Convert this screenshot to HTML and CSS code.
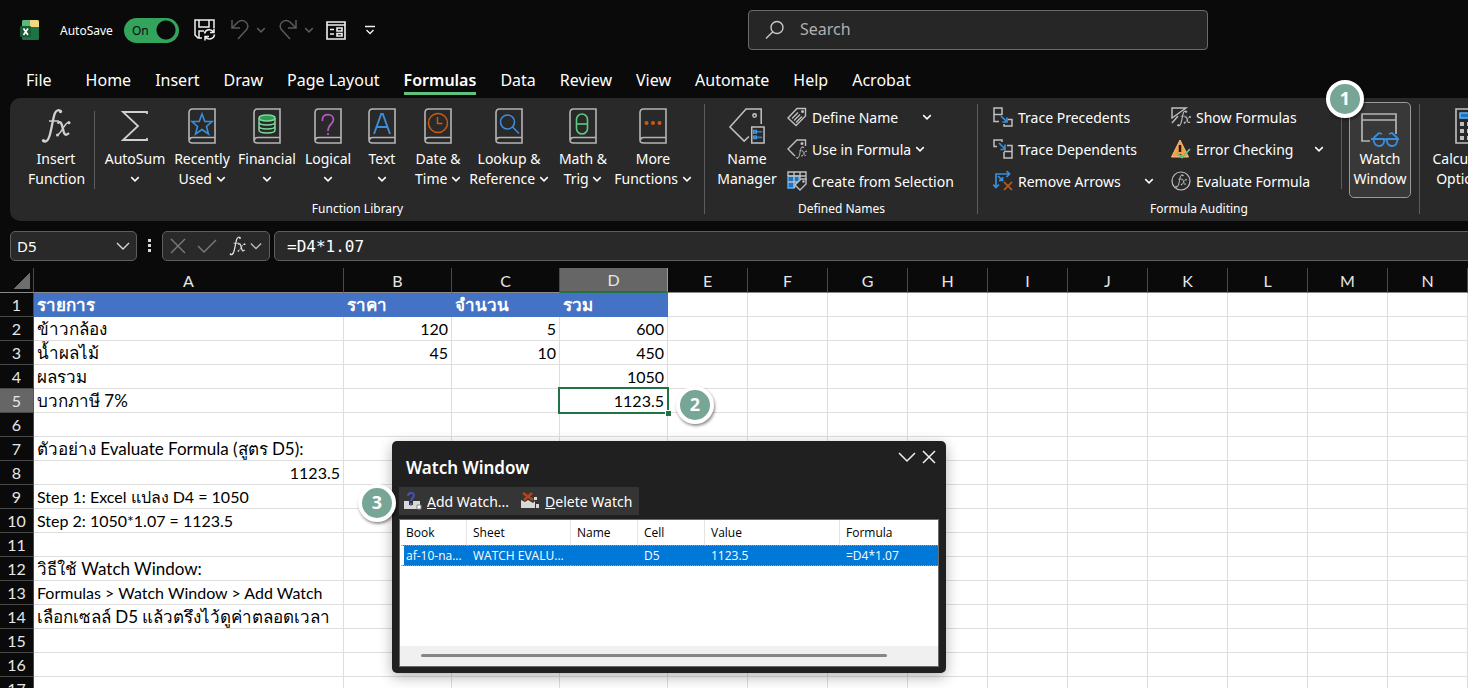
FILE: index.html
```html
<!DOCTYPE html>
<html lang="en">
<head>
    <meta charset="UTF-8">
    <title>Watch Window</title>
    <link rel="stylesheet" href="styles.css">
</head>
<body>
<svg class="defs" width="0" height="0">
    <symbol id="down" viewBox="0 0 8 8"><path d="M1 2.5 4 5.5 7 2.5" fill="none" stroke="currentColor" stroke-width="1.2"/></symbol>
    <symbol id="book" viewBox="0 0 28 36"><path d="M27 1H4.500Q1 1 1 5V32Q1 35 4.500 35H27ZM27 29.500H4.500Q1.500 29.500 1.500 32" fill="none" stroke="#b4b4b4" stroke-width="1.600"/></symbol>
    <symbol id="fx" viewBox="0 0 30 36">
        <path d="M19.500 3.500C18.500 1.500 15.500 1.500 13.800 5.500C12 10 10.500 22 8.500 28C7 33 4 35 2 32.500" fill="none" stroke="currentColor" stroke-width="2.300"/>
        <circle cx="19.500" cy="3.500" r="1.700" fill="currentColor"/><circle cx="2.500" cy="32.500" r="1.600" fill="currentColor"/>
        <path d="M8 13H18" stroke="currentColor" stroke-width="1.500"/>
        <path d="M16.500 15.500C20 11.500 21 17 22 21C23 26.500 24.500 28.500 28 25" fill="none" stroke="currentColor" stroke-width="2.300"/>
        <path d="M28.500 14C24 13 21 25 16 27.500" fill="none" stroke="currentColor" stroke-width="1.400"/>
        <circle cx="28" cy="14.800" r="1.500" fill="currentColor"/><circle cx="16.500" cy="27" r="1.500" fill="currentColor"/>
    </symbol>
</svg>

<div class="titlebar">
    <div class="quick">
        <svg class="logo" width="20" height="20" viewBox="0 0 20 20">
            <rect x="2" y="0" width="17" height="20" rx="1.500" fill="#1f7244"/>
            <path d="M3.500 0H10V7H2V1.500Q2 0 3.500 0Z" fill="#5cb87c"/>
            <path d="M10 0H17.500Q19 0 19 1.500V7H10Z" fill="#f2d680"/>
            <rect x="0" y="6" width="11" height="11" rx="1" fill="#185c37"/>
            <path d="M3.500 8.500 8 15M8 8.500 3.500 15" stroke="#fff" stroke-width="1.700"/>
        </svg>
        <label class="autosave" for="autosave">AutoSave</label>
        <span class="switch"><input type="checkbox" id="autosave" checked><span>On</span></span>
        <button aria-label="Save">
            <svg width="22" height="22" viewBox="0 0 22 22" fill="none" stroke="#f0f0f0" stroke-width="1.500">
                <path d="M8 19H4L1 16V1H20V9M5 1V8H15V1M5 19V12H10"/>
                <path d="M10.500 14.500A5 5 0 0 1 19.500 13M20 9.500V13.500H16M20.500 15.500A5 5 0 0 1 11.500 18M11 21.500V17.500H15"/>
            </svg>
        </button>
        <button class="dim" aria-label="Undo">
            <svg width="20" height="22" viewBox="0 0 20 22" fill="none" stroke="currentColor" stroke-width="1.500"><path d="M2 1V9H10M2 9 8 3C13-1 20 4 17 10L8 20"/></svg>
        </button>
        <button class="dim" aria-label="Undo list"><svg width="10" height="10"><use href="#down"/></svg></button>
        <button class="dim redo" aria-label="Redo">
            <svg width="20" height="22" viewBox="0 0 20 22" fill="none" stroke="currentColor" stroke-width="1.500"><path d="M18 1V9H10M18 9 12 3C7-1 0 4 3 10L12 20"/></svg>
        </button>
        <button class="dim" aria-label="Redo list"><svg width="10" height="10"><use href="#down"/></svg></button>
        <button class="form" aria-label="Form">
            <svg width="20" height="19" viewBox="0 0 20 19" fill="none" stroke="#f0f0f0" stroke-width="1.600"><path d="M1 1H19V18H1ZM1 4H19M4 8.500H8M4 13H8"/><path d="M11 7H16V10H11ZM11 12.500H16V15H11Z"/></svg>
        </button>
        <button class="more" aria-label="Customize toolbar">
            <svg width="10" height="10" viewBox="0 0 10 10" fill="none" stroke="#f0f0f0" stroke-width="1.400"><path d="M0 1.500H10M1.500 5 5 8.500 8.500 5"/></svg>
        </button>
    </div>
    <div class="search">
        <svg width="20" height="20" viewBox="0 0 20 20" fill="none" stroke="#c8c8c8" stroke-width="1.400"><circle cx="12" cy="7.500" r="6"/><path d="M7.800 11.800 1 18.500"/></svg>
        <input type="text" aria-label="Search" placeholder="Search">
    </div>
</div>

<nav class="tabs">
    <a href="#" class="file">File</a>
    <a href="#">Home</a>
    <a href="#">Insert</a>
    <a href="#">Draw</a>
    <a href="#">Page Layout</a>
    <a href="#" class="current">Formulas</a>
    <a href="#">Data</a>
    <a href="#">Review</a>
    <a href="#">View</a>
    <a href="#">Automate</a>
    <a href="#">Help</a>
    <a href="#">Acrobat</a>
</nav>

<div class="ribbon">
    <div class="group library">
        <div class="tools">
            <button class="big insert"><svg width="30" height="36" color="#d0d0d0"><use href="#fx"/></svg>Insert<br>Function</button>
            <i class="line"></i>
            <div class="books">
                <button class="big"><svg width="28" height="36" viewBox="0 0 28 36"><path d="M26 6V4H2L17 18 2 32H26V30" fill="none" stroke="#d0d0d0" stroke-width="1.800"/></svg>AutoSum<br><svg class="down"><use href="#down"/></svg></button>
                <button class="big"><svg width="28" height="36"><use href="#book"/><path d="M14 6 16.800 13.500H24L18.500 18.500 20.500 26 14 21.500 7.500 26 9.500 18.500 4 13.500H11.200Z" fill="none" stroke="#3a8fdc" stroke-width="1.600"/></svg>Recently<br>Used <svg class="down"><use href="#down"/></svg></button>
                <button class="big"><svg width="28" height="36"><use href="#book"/><g fill="none" stroke="#7ed59a" stroke-width="1.500"><ellipse cx="14" cy="10" rx="8" ry="3" fill="#2d9d55"/><path d="M6 10V22Q6 25 14 25T22 22V10M6 14Q6 17 14 17T22 14M6 18Q6 21 14 21T22 18"/></g></svg>Financial<br><svg class="down"><use href="#down"/></svg></button>
                <button class="big"><svg width="28" height="36"><use href="#book"/><path d="M8.500 13V11C8.500 5 19.500 5 19.500 11.500C19.500 16 14 16 14 23M14 25V27" fill="none" stroke="#b65cc8" stroke-width="1.700"/></svg>Logical<br><svg class="down"><use href="#down"/></svg></button>
                <button class="big"><svg width="28" height="36"><use href="#book"/><path d="M6 26 13.200 6H14.800L22 26M8.800 19H19.200" fill="none" stroke="#3a8fdc" stroke-width="1.900"/></svg>Text<br><svg class="down"><use href="#down"/></svg></button>
                <button class="big"><svg width="28" height="36"><use href="#book"/><g fill="none" stroke="#c75b12" stroke-width="1.500"><circle cx="14" cy="15" r="9.500"/><path d="M13.500 9V15.500H18.500"/></g></svg>Date &amp;<br>Time <svg class="down"><use href="#down"/></svg></button>
                <button class="big"><svg width="28" height="36"><use href="#book"/><g fill="none" stroke="#3a8fdc" stroke-width="1.600"><circle cx="12.500" cy="14" r="7"/><path d="M17.500 19 24 25.500"/></g></svg>Lookup &amp;<br>Reference <svg class="down"><use href="#down"/></svg></button>
                <button class="big"><svg width="28" height="36"><use href="#book"/><g fill="none" stroke="#5fc97f" stroke-width="1.600"><rect x="7.500" y="6" width="11" height="20" rx="5.500"/><path d="M7.500 16H18.500"/></g></svg>Math &amp;<br>Trig <svg class="down"><use href="#down"/></svg></button>
                <button class="big"><svg width="28" height="36"><use href="#book"/><g fill="#c75b12"><circle cx="7.500" cy="15" r="2"/><circle cx="14" cy="15" r="2"/><circle cx="20.500" cy="15" r="2"/></g></svg>More<br>Functions <svg class="down"><use href="#down"/></svg></button>
            </div>
        </div>
        <div class="caption">Function Library</div>
    </div>

    <div class="group names">
        <div class="tools">
            <button class="big">
                <svg width="38" height="38" viewBox="0 0 38 38" fill="none" stroke="#c0c0c0" stroke-width="1.600"><path d="M21 30 16 35 1 20 18 1H34V17"/><circle cx="27" cy="8" r="1.800"/><path d="M24 20H37V37H24Z"/><path d="M26 25H35M26 31H35" stroke="#2b7cd3"/><path d="M26 23.500H29V26.500H26ZM26 29.500H29V32.500H26Z" stroke="#4aa0ee" stroke-width="1.200"/></svg>Name<br>Manager</button>
            <div class="stack">
                <button><svg width="20" height="20" viewBox="0 0 20 20" fill="none" stroke="#c0c0c0" stroke-width="1.400"><path d="M1 11 10 1.500H18.500V9L9 18.500ZM5 11.500 11 5.500M7 13.500 13 7.500M9 15.500 15 9.500"/><circle cx="15.500" cy="4.500" r=".8"/></svg>Define Name<svg class="down far"><use href="#down"/></svg></button>
                <button><svg width="20" height="20" viewBox="0 0 20 20" fill="none" stroke="#c0c0c0" stroke-width="1.400"><path d="M8 17 1 10 10 1H18.500V7"/><circle cx="15" cy="4.500" r=".8"/><svg x="9" y="7" width="11" height="13" color="#c0c0c0"><use href="#fx"/></svg></svg>Use in Formula<svg class="down"><use href="#down"/></svg></button>
                <button><svg width="20" height="20" viewBox="0 0 20 20" fill="none" stroke="#c0c0c0" stroke-width="1.400"><path d="M1 5H12V11L7 17H1Z" fill="#1a73c8" stroke="#5eb0f5"/><path d="M1 5V1H19V9M1 5H19M7 1V17M13 1V8M1 11H12"/><path d="M8 14 14 8H19V13L13 19Z" fill="#292929"/><circle cx="16.500" cy="10.500" r=".6"/></svg>Create from Selection</button>
            </div>
        </div>
        <div class="caption">Defined Names</div>
    </div>

    <div class="group auditing">
        <div class="tools">
            <div class="stack trace">
                <button><svg width="20" height="20" viewBox="0 0 20 20" fill="none" stroke="#c0c0c0" stroke-width="1.500"><path d="M6 14.500H1V1H9V8M1 7.500H9M15 12.500H19V19H11V17"/><path d="M8 9 14 15M14 10.500V15H9.500" stroke="#3a8fdc" stroke-width="1.700"/></svg>Trace Precedents</button>
                <button><svg width="20" height="20" viewBox="0 0 20 20" fill="none" stroke="#c0c0c0" stroke-width="1.500"><path d="M4 7.500H1V1H9V3M11 13V19H19V6.500H14M11 12.500H19"/><path d="M6 4 12 10M12 5.500V10.500H7.500" stroke="#3a8fdc" stroke-width="1.700"/></svg>Trace Dependents</button>
                <button><svg width="20" height="20" viewBox="0 0 20 20" fill="none" stroke="#3a8fdc" stroke-width="1.700"><path d="M3 17V3H16M13.500 0 16.500 3 13.500 6M0 13.500 3 16.500 6 13.500M5 5 9.500 9.500M9.500 6V9.500H6"/><path d="M11 11 19 19M19 11 11 19" stroke="#c75b12"/></svg>Remove Arrows<svg class="down far"><use href="#down"/></svg></button>
            </div>
            <div class="stack">
                <button><svg width="20" height="20" viewBox="0 0 20 20" fill="none" stroke="#c0c0c0" stroke-width="1.400"><path d="M1 11V1H15ZM7 9 1 16"/><svg x="6" y="3" width="14" height="17" color="#c0c0c0"><use href="#fx"/></svg></svg>Show Formulas</button>
                <button><svg width="20" height="20" viewBox="0 0 20 20" fill="none"><path d="M9 1 17.500 18H.5Z" fill="#f0a04b" stroke="#f8c080"/><path d="M9 6V13M9 15V17" stroke="#2b1a08" stroke-width="2.500"/><path d="M6 14 11 18.500 19 10" stroke="#5fc97f" stroke-width="1.800"/></svg>Error Checking<svg class="down far"><use href="#down"/></svg></button>
                <button><svg width="20" height="20" viewBox="0 0 20 20" fill="none" stroke="#c0c0c0" stroke-width="1.200"><circle cx="10" cy="10" r="9"/><svg x="4" y="3" width="12" height="14" color="#d0d0d0"><use href="#fx"/></svg></svg>Evaluate Formula</button>
            </div>
            <i class="line"></i>
            <div class="watch">
                <button class="big">
                    <svg width="38" height="36" viewBox="0 0 38 36" fill="none" stroke="#b4b4b4" stroke-width="1.700"><path d="M9 29H1V2H35V22M1 8H35"/><g stroke="#3a8fdc" stroke-width="1.800"><path d="M12.500 27H23V30Q22 34 18 34Q13 34 12.500 27ZM26 27H36.500Q36 34 31.500 34Q27 34 26 30ZM23 28Q24.500 27 26 28M10 27H13M36 27H38M12.500 26 18 21 21 22M36.500 26 31 21 28 22"/></g></svg>Watch<br>Window</button>
                <span class="step">1</span>
            </div>
        </div>
        <div class="caption">Formula Auditing</div>
    </div>

    <div class="group calc">
        <div class="tools">
            <button class="big"><svg width="28" height="36" viewBox="0 0 28 36" fill="none" stroke="#c0c0c0" stroke-width="1.600"><path d="M1 1H27V35H1Z"/><path d="M5 5H23V10H5Z" fill="#1a73c8" stroke="#5eb0f5"/><path d="M5 16H23M5 23H23M5 30H23" stroke-width="4" stroke-dasharray="4 3"/></svg>Calculation<br>Options <svg class="down"><use href="#down"/></svg></button>
        </div>
    </div>
</div>

<div class="formulabar">
    <div class="namebox">
        <input type="text" aria-label="Name box" value="D5">
        <svg width="14" height="14" viewBox="0 0 14 14" fill="none" stroke="#d8d8d8" stroke-width="1.400"><path d="M1 4 7 10 13 4"/></svg>
    </div>
    <svg width="4" height="14" viewBox="0 0 4 14" fill="#d8d8d8"><path d="M0 0H3V3H0ZM0 5H3V8H0ZM0 10H3V13H0Z"/></svg>
    <div class="entry">
        <button aria-label="Cancel"><svg width="16" height="16" viewBox="0 0 16 16" fill="none" stroke="#7c7c7c" stroke-width="1.400"><path d="M1 1 15 15M15 1 1 15"/></svg></button>
        <button aria-label="Enter"><svg width="20" height="16" viewBox="0 0 20 16" fill="none" stroke="#7c7c7c" stroke-width="1.400"><path d="M1 8 7 14 19 2"/></svg></button>
        <button aria-label="Insert Function"><svg width="19" height="20" color="#e0e0e0"><use href="#fx"/></svg></button>
        <button class="list" aria-label="Function list"><svg width="12" height="12" viewBox="0 0 14 14" fill="none" stroke="#c0c0c0" stroke-width="1.500"><path d="M1 4 7 10 13 4"/></svg></button>
    </div>
    <input type="text" class="formula" aria-label="Formula" value="=D4*1.07">
</div>

<div class="sheet">
    <table class="grid">
        <colgroup>
            <col class="num"><col class="wide"><col class="mid"><col class="mid"><col class="mid">
            <col class="std"><col class="std"><col class="std"><col class="std"><col class="std"><col class="std"><col class="std"><col class="std"><col class="std"><col>
        </colgroup>
        <thead><tr id="letters"></tr></thead>
        <tbody id="rows"></tbody>
    </table>

    <div class="window">
        <div class="head">
            <h2>Watch Window</h2>
            <button aria-label="Collapse"><svg width="18" height="16" viewBox="0 0 18 16" fill="none" stroke="#f0f0f0" stroke-width="1.500"><path d="M1 4 9 12 17 4"/></svg></button>
            <button aria-label="Close"><svg width="14" height="16" viewBox="0 0 14 16" fill="none" stroke="#f0f0f0" stroke-width="1.500"><path d="M1 2 13 14M13 2 1 14"/></svg></button>
        </div>
        <div class="bar">
            <button><svg width="18" height="18" viewBox="0 0 18 18"><path d="M0 9H5V13H9V9H16V17H0Z" fill="#d8d8d8"/><path d="M13 13H17V17H13Z" fill="#fff" stroke="#888"/><path d="M4 4C4 0 10 0 10 3.500C10 6 7 6 7 9M7 11V13.500" fill="none" stroke="#4a4fb5" stroke-width="2"/></svg><span><u>A</u>dd Watch...</span></button>
            <button><svg width="20" height="18" viewBox="0 0 20 18"><path d="M1 8 5 10 8 8 13 11 15 9V16H1Z" fill="#d8d8d8"/><path d="M14 5H17V8H14ZM16 12H19V16H16Z" fill="#d8d8d8"/><path d="M3 1 13 8M12 1 4 8" stroke="#b8441a" stroke-width="2.400"/></svg><span><u>D</u>elete Watch</span></button>
        </div>
        <div class="list">
            <table>
                <colgroup><col class="c67"><col class="c104"><col class="c67"><col class="c67"><col class="c135"><col></colgroup>
                <thead><tr><th>Book</th><th>Sheet</th><th>Name</th><th>Cell</th><th>Value</th><th>Formula</th></tr></thead>
                <tbody><tr><td>af-10-na...</td><td>WATCH EVALU...</td><td></td><td>D5</td><td>1123.5</td><td>=D4*1.07</td></tr></tbody>
            </table>
            <div class="scroll"><i></i></div>
        </div>
        <span class="step">3</span>
    </div>
</div>

<script>
	var letters = "ABCDEFGHIJKLMN";
	var data = {
		A1: "รายการ", B1: "ราคา", C1: "จำนวน", D1: "รวม",
		A2: "ข้าวกล้อง", B2: 120, C2: 5, D2: 600,
		A3: "น้ำผลไม้", B3: 45, C3: 10, D3: 450,
		A4: "ผลรวม", D4: 1050,
		A5: "บวกภาษี 7%", D5: 1123.5,
		A7: "ตัวอย่าง Evaluate Formula (สูตร D5):",
		A8: 1123.5,
		A9: "Step 1: Excel แปลง D4 = 1050",
		A10: "Step 2: 1050*1.07 = 1123.5",
		A12: "วิธีใช้ Watch Window:",
		A13: "Formulas > Watch Window > Add Watch",
		A14: "เลือกเซลล์ D5 แล้วตรึงไว้ดูค่าตลอดเวลา"
	};

	//column letters
	var oLetters = document.getElementById("letters");
	oLetters.innerHTML = '<th class="corner"></th>';
	for (var i=0;i<letters.length;i++) {
		var th = document.createElement("th");
		th.textContent = letters[i];
		if(letters[i]=="D") th.className = "on";
		oLetters.appendChild(th);
	}

	//rows
	var oRows = document.getElementById("rows");
	for (var r=1;r<=17;r++) {
		var tr = document.createElement("tr");
		var num = document.createElement("th");
		num.textContent = r;
		if(r==5) num.className = "on";
		tr.appendChild(num);
		for (var c=0;c<letters.length;c++) {
			var td = document.createElement("td");
			var val = data[letters[c]+r];
			if(val!==undefined) td.textContent = val;
			if(typeof val=="number") td.className = "right";
			//thai text is set one size larger
			if(/^[ก-๙]/.test(val)) td.className = "thai";
			if(r==1 && c<4) td.className = "thai title";
			if(r==5 && letters[c]=="D"){
				td.className = "right active";
				td.innerHTML += '<b></b><span class="step">2</span>';
			}
			tr.appendChild(td);
		}
		oRows.appendChild(tr);
	}
</script>
</body>
</html>
```
FILE: styles.css
```css
* {
    padding: 0;
    margin: 0;
    box-sizing: border-box;
}

body {
    height: 100vh;
    display: flex;
    flex-direction: column;
    overflow: hidden;
    background: #0a0a0a;
    color: #fff;
    font-family: "Noto Sans", "Open Sans", sans-serif;
    font-size: 14px;
}

button, input {
    font: inherit;
    color: inherit;
    background: none;
    border: 0;
    outline: 0;
}

svg {
    display: block;
    flex: none;
}

.defs {
    position: absolute;
}

/* title bar */
.titlebar {
    display: flex;
    align-items: center;
    height: 60px;
    flex: none;
}

.quick {
    display: flex;
    align-items: center;
    flex: 0 0 748px;
    padding-left: 20px;
}

.autosave {
    margin-left: 20px;
    width: 56px;
    font-size: 12px;
    white-space: nowrap;
}

.switch {
    position: relative;
    margin: 0 15px 0 8px;
    width: 55px;
    height: 25px;
}

.switch input {
    display: block;
    appearance: none;
    width: 55px;
    height: 25px;
    border-radius: 13px;
    background: radial-gradient(circle at 42px 12px, #0a0a0a 9px, #33a45c 10px);
}

.switch span {
    position: absolute;
    left: 8px;
    top: 4px;
    font-size: 12px;
    line-height: 18px;
    color: #0a0a0a;
    pointer-events: none;
}

.quick button {
    margin-right: 6px;
}

.quick button:nth-of-type(1) {
    margin-right: 14px;
}

.quick .dim {
    color: #5a5a5a;
}

.quick .redo {
    margin-left: 6px;
}

.quick .form {
    margin-left: 6px;
    margin-right: 19px;
}

.search {
    display: flex;
    align-items: center;
    gap: 15px;
    width: 460px;
    height: 40px;
    padding-left: 16px;
    border: 1px solid #6a6a6a;
    border-radius: 4px;
    background: #262626;
    font-size: 16px;
}

.search input {
    flex: 1;
    padding-bottom: 2px;
}

.search input::placeholder {
    color: #b0b0b0;
}

/* tabs */
.tabs {
    display: flex;
    gap: 24px;
    height: 38px;
    flex: none;
    padding: 6px 0 0 26px;
}

.tabs a {
    height: 29px;
    line-height: 28px;
    font-size: 16px;
    color: #fff;
    text-decoration: none;
    white-space: nowrap;
}

.tabs .file {
    margin-right: 10px;
}

.tabs .current {
    font-weight: 600;
    border-bottom: 3px solid #5fc27d;
}

/* ribbon */
.ribbon {
    display: flex;
    flex: none;
    height: 123px;
    margin-left: 10px;
    border-radius: 10px 0 0 10px;
    background: #292929;
}

.group {
    position: relative;
    flex: none;
    padding: 9px 0 0;
}

.group::after {
    content: "";
    position: absolute;
    right: 0;
    top: 6px;
    width: 1px;
    height: 110px;
    background: #5c5c5c;
}

.tools {
    display: flex;
    align-items: flex-start;
    height: 92px;
}

.caption {
    font-size: 12px;
    line-height: 20px;
    text-align: center;
}

.big {
    display: block;
    line-height: 20px;
    text-align: center;
    white-space: nowrap;
}

.big > svg:first-child {
    margin: 1px auto 5px;
    height: 36px;
    overflow: visible;
}

svg.down {
    display: inline-block;
    width: 10px;
    height: 10px;
}

.line {
    width: 1px;
    height: 78px;
    margin-top: 4px;
    background: #5c5c5c;
}

.library {
    width: 695px;
}

.insert {
    width: 56px;
    margin: 0 10px 0 18px;
}

.books {
    display: grid;
    grid-template-columns: 70px 64px 66px 56px 52px 60px 82px 66px 74px;
    margin-left: 5px;
    align-items: start;
}

.books .big {
    margin: 0 -4px;
}

.names {
    width: 273px;
    padding-left: 12px;
}

.names .caption {
    margin-left: -12px;
}

.names .big {
    width: 60px;
    margin-right: 10px;
}

.stack button {
    display: flex;
    align-items: center;
    height: 32px;
    white-space: nowrap;
}

.stack {
    margin-top: -6px;
}

.stack button > svg:first-child {
    margin-right: 5px;
}

.stack .down {
    margin-left: 4px;
}

.stack .far {
    margin-left: auto;
}

.names .stack button:first-child {
    width: 145px;
}

.auditing {
    width: 442px;
}

.auditing .stack {
    width: 153px;
    margin-right: 17px;
}

.auditing .trace {
    width: 161px;
    margin-left: 15px;
}

.auditing .stack button {
    width: 100%;
}

.watch {
    position: relative;
    margin: -5px 0 0 7px;
}

.watch .big {
    width: 62px;
    height: 96px;
    padding-bottom: 8px;
    border: 1px solid #9a9a9a;
    border-radius: 5px;
    background: #383838;
}

.watch .big > svg:first-child {
    margin-top: 9px;
    margin-bottom: 1px;
}

.watch .step {
    left: -23px;
    top: -22px;
}

.calc {
    width: 98px;
}

.calc .big {
    width: 100%;
}

.step {
    position: absolute;
    width: 38px;
    height: 38px;
    border: 4px solid #fff;
    border-radius: 50%;
    background: #77a596;
    box-shadow: 1px 2px 3px rgba(0, 0, 0, .45);
    color: #fff;
    font-family: "Open Sans", sans-serif;
    font-size: 18px;
    font-weight: bold;
    line-height: 28px;
    text-align: center;
}

/* formula bar */
.formulabar {
    display: flex;
    align-items: center;
    height: 30px;
    flex: none;
    margin: 10px 0 7px 10px;
}

.namebox, .entry, .formula {
    display: flex;
    align-items: center;
    height: 30px;
    border: 1px solid #5e5e5e;
    border-radius: 5px;
    background: #292929;
}

.namebox {
    width: 127px;
    margin-right: 11px;
    padding: 0 6px;
}

.namebox input {
    width: 99px;
    font-size: 15px;
}

.entry {
    width: 108px;
    margin: 0 4px 0 10px;
    padding-left: 7px;
    gap: 11px;
}

.entry .list {
    margin-left: -8px;
}

.formula {
    flex: 1;
    margin-right: -10px;
    padding-left: 12px;
    font-family: "DejaVu Sans Mono", monospace;
    font-size: 16px;
}

/* sheet */
.sheet {
    position: relative;
    flex: 1;
    overflow: hidden;
    background: #fff;
    color: #000;
}

.grid {
    width: 100%;
    min-width: 1468px;
    table-layout: fixed;
    border-collapse: separate;
    border-spacing: 0;
    font-family: Lato, sans-serif;
    font-size: 16px;
}

.num {
    width: 34px;
}

.wide {
    width: 310px;
}

.mid {
    width: 108px;
}

.std {
    width: 80px;
}

.grid th {
    height: 24px;
    background: #0a0a0a;
    border-right: 1px solid #4a4a4a;
    border-bottom: 1px solid #4a4a4a;
    color: #e6e6e6;
    font-weight: normal;
    line-height: 23px;
}

.grid thead th {
    height: 25px;
    border-bottom-color: #8a8a8a;
}

.grid .corner {
    background: linear-gradient(135deg, transparent 50%, #6e6e6e 50%) 14px 5px / 16px 16px no-repeat #0a0a0a;
}

.grid th.on {
    background: #666;
    border-right-color: #217346;
}

.grid thead th.on {
    border-right-color: #9a9a9a;
    border-bottom: 2px solid #217346;
}

.grid td {
    height: 24px;
    padding: 0 3px;
    border-right: 1px solid #dedede;
    border-bottom: 1px solid #dedede;
    line-height: 23px;
    white-space: nowrap;
}

.grid .right {
    text-align: right;
}

.grid .thai {
    font-size: 17px;
}

.grid .title {
    background: #4472c4;
    border-color: #4472c4;
    color: #fff;
    font-weight: bold;
}

.grid .active {
    position: relative;
    z-index: 1;
}

.active b {
    position: absolute;
    left: -2px;
    top: -2px;
    right: -2px;
    bottom: -2px;
    border: 2px solid #217346;
}

.active b::after {
    content: "";
    position: absolute;
    right: -4px;
    bottom: -4px;
    width: 5px;
    height: 5px;
    background: #217346;
    border: 1px solid #fff;
    border-width: 1px 0 0 1px;
    box-sizing: content-box;
}

.active .step {
    right: -47px;
    top: -3px;
}

/* watch window */
.window {
    position: absolute;
    z-index: 2;
    left: 392px;
    top: 173px;
    width: 554px;
    padding: 0 7px 6px;
    border-radius: 5px;
    background: #202020;
    box-shadow: 0 4px 14px rgba(0, 0, 0, .3);
    color: #fff;
}

.head {
    display: flex;
    align-items: flex-start;
    height: 46px;
    padding: 8px 3px 0 7px;
}

.head h2 {
    flex: 1;
    padding-top: 8px;
    font-size: 17px;
    font-weight: 600;
    line-height: 22px;
}

.head button {
    margin-left: 6px;
}

.bar {
    display: inline-flex;
    align-items: center;
    gap: 11px;
    height: 28px;
    padding: 0 7px 0 5px;
    background: #353535;
    vertical-align: top;
}

.bar button {
    display: flex;
    align-items: center;
    gap: 5px;
    white-space: nowrap;
}

.list table {
    width: 100%;
    table-layout: fixed;
    border-collapse: separate;
    border-spacing: 0;
}

.window .list {
    margin-top: 4px;
    border: 1px solid #6a6a6a;
    background: #fff;
    color: #000;
    font-family: "Open Sans", sans-serif;
    font-size: 12px;
}

.c67 {
    width: 67px;
}

.c104 {
    width: 104px;
}

.c135 {
    width: 135px;
}

.list th {
    height: 25px;
    padding-left: 6px;
    border-right: 1px solid #e4e4e4;
    font-weight: normal;
    text-align: left;
}

.list th:last-child {
    border-right: 0;
}

.list td {
    height: 21px;
    padding-left: 6px;
    background: #0078d7;
    border: 1px dotted #e08a3a;
    border-width: 1px 0;
    color: #fff;
    white-space: nowrap;
}

.list td:first-child {
    padding-left: 2px;
    border-left: 4px solid #fff;
}

.scroll {
    margin-top: 80px;
    height: 20px;
    padding: 8px 51px 0 21px;
    background: #f0f0f0;
}

.scroll i {
    display: block;
    height: 3px;
    border-radius: 2px;
    background: #868686;
}

.window .step {
    left: -34px;
    top: 43px;
}
```
